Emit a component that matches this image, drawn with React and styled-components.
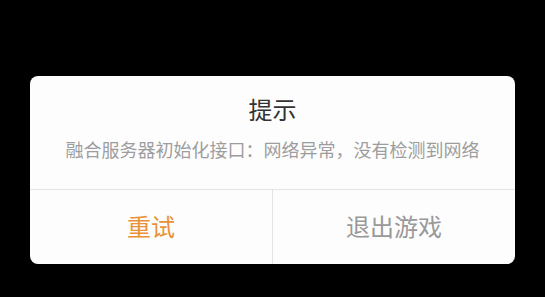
import styled, { createGlobalStyle } from "styled-components";

const GlobalStyle = createGlobalStyle`
  html, body {
    margin: 0;
    padding: 0;
    background: #000;
  }
  body {
    font-family: "Noto Sans CJK SC", "Noto Sans", sans-serif;
  }
`;

const Screen = styled.div`
  width: 545px;
  height: 297px;
  background: #000;
  display: flex;
  justify-content: center;
  padding-top: 76px;
  box-sizing: border-box;
`;

const Dialog = styled.div`
  width: 485px;
  height: 188px;
  background: #fdfdfd;
  border-radius: 8px;
  display: flex;
  flex-direction: column;
  overflow: hidden;
`;

const Body = styled.div`
  height: 114px;
  box-sizing: border-box;
  padding-top: 18px;
  display: flex;
  flex-direction: column;
  align-items: center;
  border-bottom: 1px solid #e4e4e4;
`;

const Title = styled.div`
  font-size: 24px;
  line-height: 30px;
  color: #333;
`;

const Message = styled.div`
  margin-top: 13px;
  font-size: 18px;
  line-height: 24px;
  color: #9d9d9d;
`;

const Actions = styled.div`
  flex: 1;
  display: flex;
`;

const ActionButton = styled.button`
  flex: 1;
  border: none;
  background: transparent;
  font-family: inherit;
  font-size: 24px;
  padding: 0 0 3px;
  color: ${({ primary }) => (primary ? "#ea9238" : "#999")};
  & + & {
    border-left: 1px solid #e4e4e4;
  }
`;

const App = () => {
  return (
    <>
      <GlobalStyle />
      <Screen>
        <Dialog>
          <Body>
            <Title>提示</Title>
            <Message>融合服务器初始化接口：网络异常，没有检测到网络</Message>
          </Body>
          <Actions>
            <ActionButton primary>重试</ActionButton>
            <ActionButton>退出游戏</ActionButton>
          </Actions>
        </Dialog>
      </Screen>
    </>
  );
};

export default App;
